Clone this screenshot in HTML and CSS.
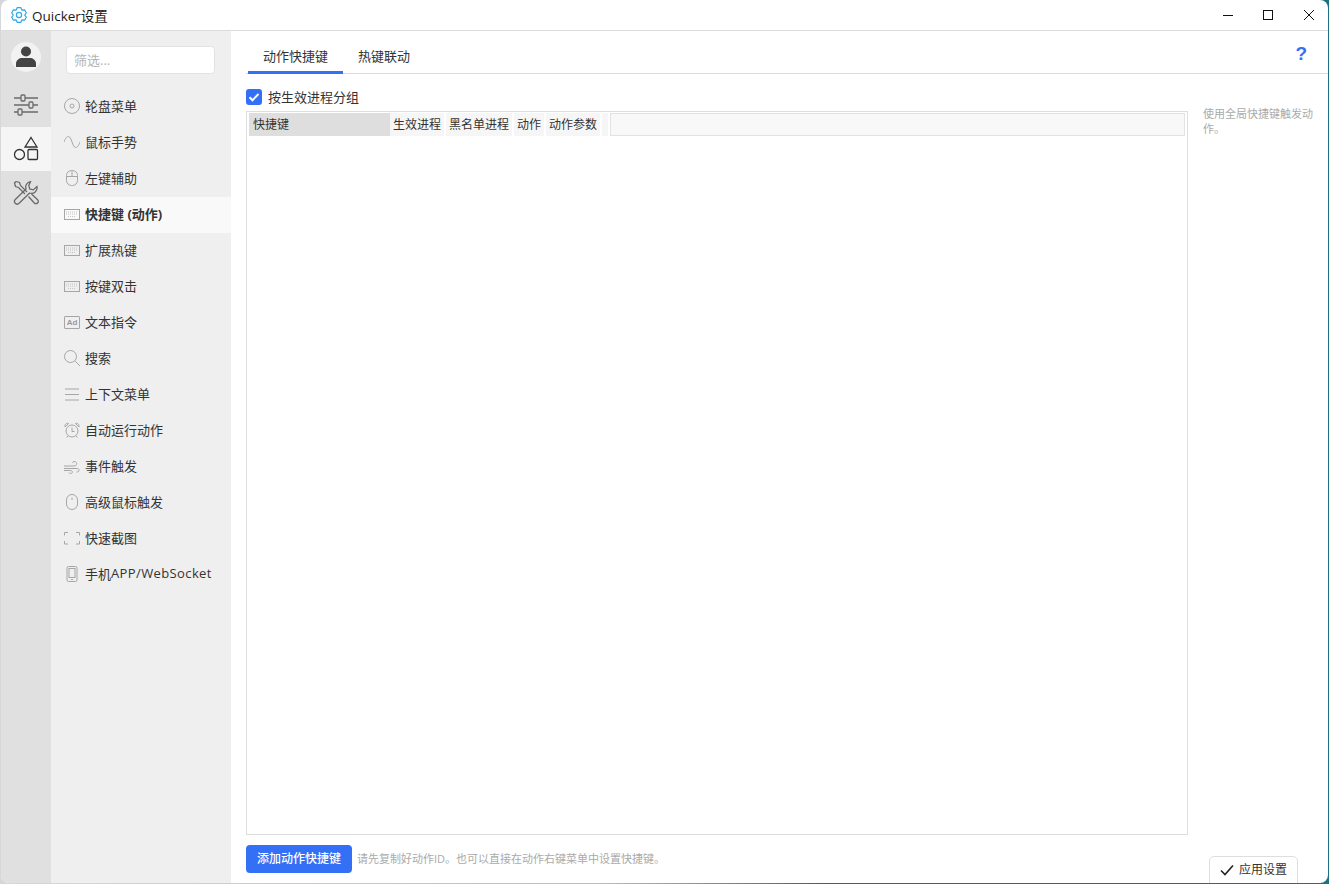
FILE: index.html
```html
<!DOCTYPE html>
<html lang="zh">
<head>
<meta charset="utf-8">
<title>Quicker设置</title>
<link rel="stylesheet" href="styles.css">
</head>
<body>
<div class="window">
  <header class="titlebar">
    <svg class="app-icon" viewBox="0 0 16 16" width="16" height="16"><path d="M6.290 .59L9.710 .59 10.850 3.060 13.560 2.820 15.270 5.780 13.700 8 15.270 10.220 13.560 13.180 10.850 12.940 9.710 15.410 6.290 15.410 5.150 12.940 2.440 13.180 .73 10.220 2.300 8 .73 5.780 2.440 2.820 5.150 3.060z"/><circle cx="8" cy="8" r="2.600"/></svg>
    <span class="app-title">Quicker设置</span>
    <div class="caption">
      <span class="cap-btn"><svg viewBox="0 0 12 12" width="12" height="12"><path d="M1 6.500h10"/></svg></span>
      <span class="cap-btn"><svg viewBox="0 0 12 12" width="12" height="12"><rect x="1.500" y="1.500" width="9" height="9"/></svg></span>
      <span class="cap-btn"><svg viewBox="0 0 12 12" width="12" height="12"><path d="M1 1l10 10M11 1L1 11"/></svg></span>
    </div>
  </header>
  <div class="body">
    <nav class="rail">
      <div class="avatar"><svg viewBox="0 0 20 22" width="20" height="22"><circle cx="10" cy="5.500" r="5"/><path d="M0 21v-3.500C0 14 3.500 12 6 12h8c2.500 0 6 2 6 5.500V21z"/></svg></div>
      <div class="rail-item"><svg viewBox="0 0 26 24" width="26" height="24"><path d="M1 5h7M12 5h13M1 12h15M20 12h5M1 19h4M9 19h16"/><rect x="8" y="2" width="4" height="6" rx="1"/><rect x="16" y="9" width="4" height="6" rx="1"/><rect x="5" y="16" width="4" height="6" rx="1"/></svg></div>
      <div class="rail-item active"><svg viewBox="0 0 26 26" width="26" height="26"><path d="M18 1.500l6 9.500H12z"/><circle cx="6.500" cy="18.500" r="5"/><rect x="15" y="13.500" width="9.500" height="10" rx="1"/></svg></div>
      <div class="rail-item"><svg viewBox="0 0 26 26" width="26" height="26"><path d="M3 1.500L1.500 3l1 3.500 3 1 6.500 6.500"/><path d="M3 1.500l3.500 1 1 3L14 12"/><path d="M17.500 1.700a5.500 5.500 0 0 0-4.500 7.300L2.300 19.500a2.700 2.700 0 0 0 0 3.800 2.700 2.700 0 0 0 3.800 0L16.600 13a5.500 5.500 0 0 0 7.300-6.500l-3.600 3.400-3.600-1-.9-3.500z"/><path d="M15.500 16.500l5.800 6.500a2.300 2.300 0 0 0 3.300-3.300L18.500 14"/></svg></div>
    </nav>
    <aside class="subnav">
      <div class="filter"><span>筛选...</span></div>
      <ul class="menu">
        <li class="menu-row"><svg class="ico" viewBox="0 0 16 16"><circle cx="8" cy="8" r="7.500"/><circle cx="8" cy="8" r="2"/></svg>轮盘菜单</li>
        <li class="menu-row"><svg class="ico" viewBox="0 0 16 16"><path d="M0 8c1.500-4 3-5.500 4.500-5.500 3 0 4 11 7 11C13 13.500 14.500 12 16 8"/></svg>鼠标手势</li>
        <li class="menu-row"><svg class="ico" viewBox="0 0 16 16"><rect x="2.500" y=".5" width="11" height="15" rx="5"/><path d="M2.500 6.500h11M8 .5v6"/></svg>左键辅助</li>
        <li class="menu-row current"><svg class="ico" viewBox="0 0 16 16"><rect x=".5" y="3.500" width="15" height="10"/><path class="dots" d="M2 6h12M2 8h12M4 10.500h8"/></svg>快捷键 (动作)</li>
        <li class="menu-row"><svg class="ico" viewBox="0 0 16 16"><rect x=".5" y="3.500" width="15" height="10"/><path class="dots" d="M2 6h12M2 8h12M4 10.500h8"/></svg>扩展热键</li>
        <li class="menu-row"><svg class="ico" viewBox="0 0 16 16"><rect x=".5" y="3.500" width="15" height="10"/><path class="dots" d="M2 6h12M2 8h12M4 10.500h8"/></svg>按键双击</li>
        <li class="menu-row"><span class="ad">Ad</span>文本指令</li>
        <li class="menu-row"><svg class="ico" viewBox="0 0 16 16"><circle cx="6.500" cy="6.500" r="6"/><path d="M11 11l5 5"/></svg>搜索</li>
        <li class="menu-row"><svg class="ico" viewBox="0 0 16 16"><path d="M1 3h14M1 8.500h14M1 14h14"/></svg>上下文菜单</li>
        <li class="menu-row"><svg class="ico" viewBox="0 0 16 16"><circle cx="8" cy="9" r="6"/><path d="M8 5.500V9.500h2.500M1 5l3.500-3.500c-2-1-4 1-3.500 3.500zM15 5l-3.500-3.500c2-1 4 1 3.500 3.500zM4 14l-1.500 1.500M12 14l1.500 1.500"/></svg>自动运行动作</li>
        <li class="menu-row"><svg class="ico" viewBox="0 0 16 16"><path d="M0 8h10c4 0 3-5 0-4.500-1 .2-1.500 1-1.500 1.500M0 10.500h13c3 0 2.500 4-.5 3.500M0 12.500h6.500c2.500 0 2.500 3 0 3-1 0-1.500-.5-1.500-1"/></svg>事件触发</li>
        <li class="menu-row"><svg class="ico" viewBox="0 0 16 16"><rect x="2.500" y=".5" width="11" height="15" rx="5.500"/><path d="M8 3.500v2.500"/></svg>高级鼠标触发</li>
        <li class="menu-row"><svg class="ico" viewBox="0 0 16 16"><path d="M4 2.500H.5v3M12 2.500h3.500v3M4 14H.5v-3M12 14h3.500v-3"/></svg>快速截图</li>
        <li class="menu-row"><svg class="ico" viewBox="0 0 16 16"><rect x="3" y=".5" width="10" height="15" rx="1.500"/><rect x="5" y="2.500" width="6" height="9"/><path d="M7 13.500h2"/></svg>手机<span class="wide">APP/WebSocket</span></li>
      </ul>
    </aside>
    <main class="main">
      <div class="tabs">
        <span class="tab selected">动作快捷键</span>
        <span class="tab">热键联动</span>
        <span class="help">?</span>
      </div>
      <div class="content">
        <section class="left">
          <label class="check-row">
            <span class="checkbox"><svg viewBox="0 0 16 16" width="16" height="16"><path d="M3.500 8.200l3 3 6-6.200"/></svg></span>
            <span class="check-label">按生效进程分组</span>
          </label>
          <div class="table">
            <div class="thead">
              <span class="th key">快捷键</span>
              <span class="th c1">生效进程</span>
              <span class="th c2">黑名单进程</span>
              <span class="th c3">动作</span>
              <span class="th c4">动作参数</span>
              <span class="th c5"></span>
              <span class="th fill"></span>
            </div>
          </div>
          <div class="footer">
            <button class="primary">添加动作快捷键</button>
            <span class="note">请先复制好动作ID。也可以直接在动作右键菜单中设置快捷键。</span>
          </div>
        </section>
        <section class="right">
          <p class="hint">使用全局快捷键触发动作。</p>
          <button class="apply"><svg viewBox="0 0 14 12" width="14" height="12"><path d="M1 6.500l4 4L13 1.500"/></svg><span class="apply-label">应用设置</span></button>
        </section>
      </div>
    </main>
  </div>
</div>
</body>
</html>
```

FILE: styles.css
```css
* { box-sizing: border-box; }
html, body { margin: 0; height: 100%; overflow: hidden; }
body {
  background: linear-gradient(to right, #d4d8da 0, #b4c0c6 45%, #1f6f82 62%, #1f6f82 100%);
  font-family: "Open Sans", "Noto Sans CJK SC", sans-serif;
  font-size: 13px;
  color: #333;
}
.window {
  width: 1327px;
  height: 883px;
  margin-left: 1px;
  background: #fff;
  border-radius: 8px;
  overflow: hidden;
  display: flex;
  flex-direction: column;
}
.titlebar {
  height: 31px;
  flex: none;
  display: flex;
  align-items: center;
  padding-left: 10px;
  padding-bottom: 1px;
  border-bottom: 1px solid #dcdcdc;
}
.app-icon { fill: none; stroke: #2fa8ea; stroke-width: 1.200; stroke-linejoin: round; margin-right: 5px; }
.app-title { font-size: 13.5px; color: #1a1a1a; }
.caption { margin-left: auto; display: flex; margin-right: -1px; }
.cap-btn { width: 40.5px; height: 30px; display: flex; align-items: center; justify-content: center; padding-top: 1px; }
.cap-btn svg { fill: none; stroke: #111; stroke-width: 1; }
.body { flex: 1; display: flex; min-height: 0; }
.rail { width: 50px; flex: none; background: #e0e0e0; padding-top: 11px; }
.avatar {
  width: 30px; height: 30px; margin: 0 auto 11px; border-radius: 50%;
  background: #f2f2f2; display: flex; align-items: center; justify-content: center;
}
.avatar svg { fill: #444; }
.rail-item { height: 44px; display: flex; align-items: center; justify-content: center; }
.rail-item svg { fill: none; stroke: #6a6a6a; stroke-width: 1.300; }
.rail-item.active { background: #f5f5f5; }
.rail-item.active svg { stroke: #333; }
.subnav { width: 180px; flex: none; background: #efefef; padding-top: 15px; }
.filter {
  width: 149px; height: 28px; margin-left: 15px;
  background: #fff; border: 1px solid #e3e3e3; border-radius: 4px;
  padding: 0 0 2px 7px; display: flex; align-items: center;
  color: #b5b5b5; font-size: 13px;
}
.menu { list-style: none; margin: 15px 0 0; padding: 0; }
.menu-row {
  height: 36px; display: flex; align-items: center; padding: 0 0 4px 13px;
  color: #333; font-size: 13px;
}
.menu-row.current { background: #f9f9f9; font-weight: 700; }
.ico { width: 16px; height: 16px; margin: 2px 5px 0 0; fill: none; stroke: #a6a6a6; stroke-width: 1; flex: none; }
.ico .dots { stroke: #c4c4c4; stroke-width: 1; stroke-dasharray: 1 1; }
.wide { letter-spacing: .38px; }
.ad {
  width: 16px; height: 13px; margin: 2px 5px 0 0; border: 1px solid #a6a6a6; border-radius: 1px;
  font: 700 8px/11px "Liberation Sans", sans-serif; color: #999; text-align: center; flex: none;
}
.main { flex: 1; min-width: 0; display: flex; flex-direction: column; }
.tabs {
  height: 43px; flex: none; display: flex; align-items: flex-end;
  margin-left: 15px; border-bottom: 1px solid #dcdcdc; position: relative;
}
.tab { height: 39px; padding: 12px 15px 0; font-size: 13px; color: #333; margin-left: 2px; }
.tab + .tab { margin-left: 0; }
.tab.selected { border-bottom: 3px solid #3370f5; margin-bottom: -1px; height: 40px; }
.help {
  position: absolute; right: 21px; top: 12px;
  font: 700 19px/22px "Liberation Sans", sans-serif; color: #3370f5;
}
.content { flex: 1; display: flex; min-height: 0; }
.left { width: 957px; flex: none; padding-left: 15px; display: flex; flex-direction: column; }
.check-row { height: 37px; flex: none; display: flex; align-items: center; gap: 6px; font-size: 13px; color: #333; padding-top: 11px; padding-bottom: 2px; }
.check-label { margin-top: -2px; }
.checkbox { width: 16px; height: 16px; background: #3370f5; border-radius: 3px; display: block; }
.checkbox svg { fill: none; stroke: #fff; stroke-width: 2; display: block; }
.table { flex: 1; border: 1px solid #dedede; padding: 1px 2px; min-height: 0; }
.thead { display: flex; height: 23px; gap: 2px; font-size: 12px; color: #333; }
.th { background: #f6f6f6; display: flex; align-items: center; padding: 0 0 2px 3px; height: 23px; }
.th.key { width: 141px; background: #dedede; padding-left: 4px; margin-right: -2px; }
.th.c1 { width: 54px; }
.th.c2 { width: 66px; }
.th.c3 { width: 30px; }
.th.c4 { width: 54px; }
.th.c5 { width: 6px; }
.th.fill { flex: 1; background: #f8f8f8; border: 1px solid #e2e2e2; }
.footer { height: 48px; flex: none; display: flex; align-items: flex-start; padding-top: 10px; gap: 5px; }
.primary {
  width: 106px; height: 28px; border: 0; border-radius: 4px; background: #3370f5; color: #fff;
  font: 500 12px "Noto Sans CJK SC", sans-serif; padding: 0 0 3px;
}
.note { font-size: 11px; color: #aaa; line-height: 28px; }
.right { flex: 1; padding-left: 15px; display: flex; flex-direction: column; min-width: 0; }
.hint { margin: 32px 0 0; font-size: 11px; line-height: 15px; color: #aaa; width: 112px; }
.apply {
  margin-top: auto; margin-left: 6px; margin-bottom: -1px; width: 89px; height: 28px; flex: none;
  background: #fff; border: 1px solid #dedede; border-radius: 5px 5px 0 0; color: #333;
  font: 12px "Noto Sans CJK SC", sans-serif; display: flex; align-items: center; justify-content: center; gap: 5px; padding: 0;
}
.apply svg { fill: none; stroke: #222; stroke-width: 1.600; }
.apply-label { margin-top: -3px; }
```
